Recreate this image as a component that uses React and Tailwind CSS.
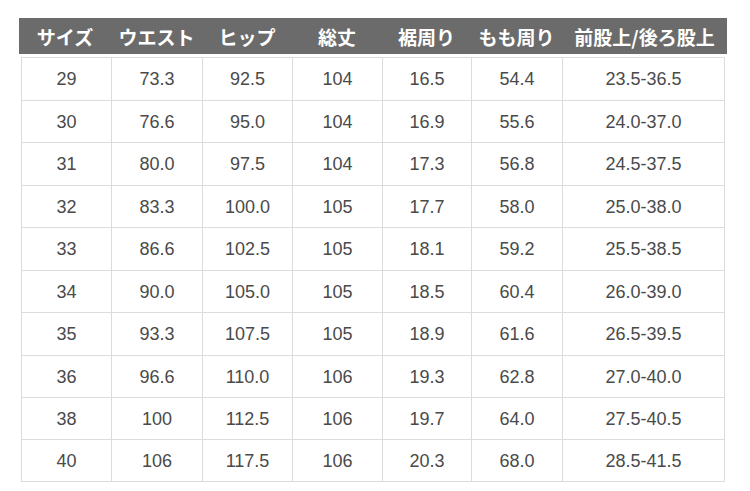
const headers = [
  ["サイズ", "w-[92px]"],
  ["ウエスト", "w-[91px]"],
  ["ヒップ", "w-[90px]"],
  ["総丈", "w-[90px]"],
  ["裾周り", "w-[89px]"],
  ["もも周り", "w-[91px]"],
  ["前股上/後ろ股上", "w-[165px]"],
];

const colW = ["w-[90px]", "w-[91px]", "w-[90px]", "w-[90px]", "w-[89px]", "w-[91px]", "w-[162px]"];

const rows = [
  ["29", "73.3", "92.5", "104", "16.5", "54.4", "23.5-36.5"],
  ["30", "76.6", "95.0", "104", "16.9", "55.6", "24.0-37.0"],
  ["31", "80.0", "97.5", "104", "17.3", "56.8", "24.5-37.5"],
  ["32", "83.3", "100.0", "105", "17.7", "58.0", "25.0-38.0"],
  ["33", "86.6", "102.5", "105", "18.1", "59.2", "25.5-38.5"],
  ["34", "90.0", "105.0", "105", "18.5", "60.4", "26.0-39.0"],
  ["35", "93.3", "107.5", "105", "18.9", "61.6", "26.5-39.5"],
  ["36", "96.6", "110.0", "106", "19.3", "62.8", "27.0-40.0"],
  ["38", "100", "112.5", "106", "19.7", "64.0", "27.5-40.5"],
  ["40", "106", "117.5", "106", "20.3", "68.0", "28.5-41.5"],
];

const rowH = ["h-[43px]", "h-[42px]", "h-[43px]", "h-[42px]", "h-[43px]", "h-[42px]", "h-[43px]", "h-[42px]", "h-[42px]", "h-[42px]"];

export default function App() {
  return (
    <div className="w-[750px] h-[491px] bg-white pt-[18px] pl-[19px]">
      <div
        className="flex w-[708px] h-[36px] bg-[#6b6b6b] text-white font-bold text-[19px]"
        style={{ fontFamily: '"Noto Sans CJK JP", "Noto Sans", sans-serif' }}
      >
        {headers.map(([t, w]) => (
          <div key={t} className={`${w} flex items-center justify-center leading-none`}>
            {t}
          </div>
        ))}
      </div>
      <div
        className="ml-[2px] mt-[3px] w-[704px] border-l border-t border-[#dcdcdc] text-[#4a4a4a] text-[18px]"
        style={{ fontFamily: '"Liberation Sans", Arial, sans-serif' }}
      >
        {rows.map((r, i) => (
          <div key={i} className={`flex ${rowH[i]}`}>
            {r.map((c, j) => (
              <div
                key={j}
                className={`${colW[j]} border-r border-b border-[#dcdcdc] flex items-center justify-center leading-none`}
              >
                {c}
              </div>
            ))}
          </div>
        ))}
      </div>
    </div>
  );
}
